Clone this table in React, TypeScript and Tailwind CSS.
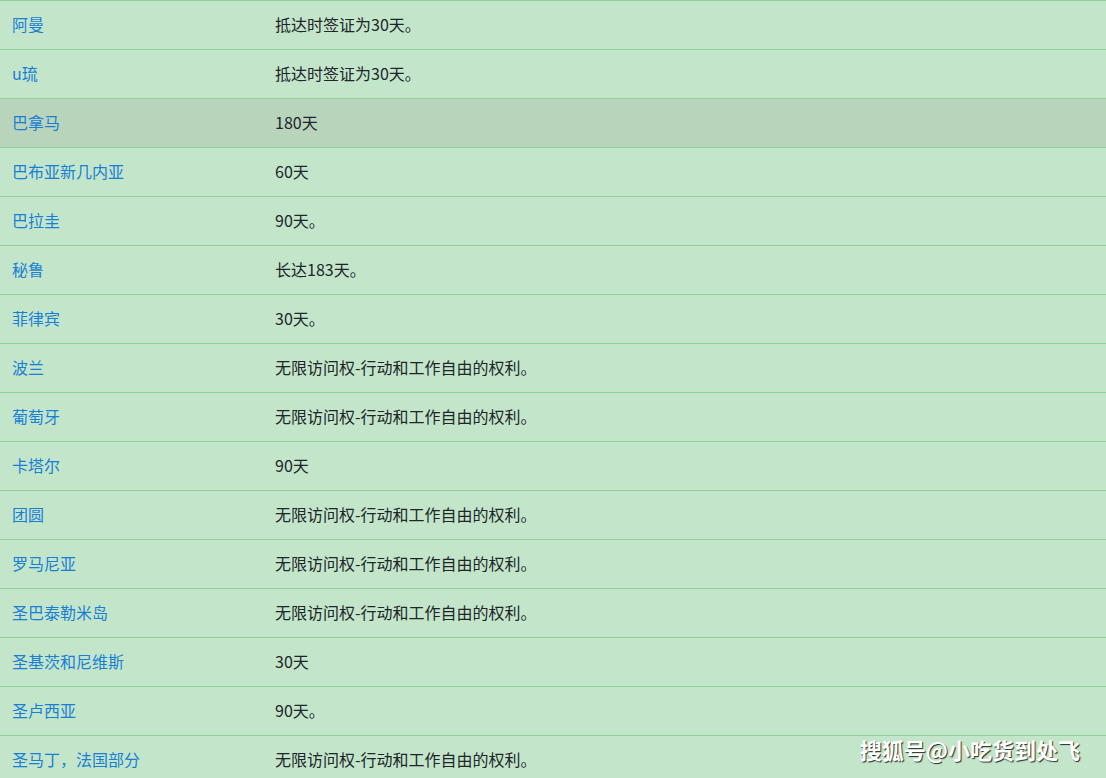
import React from "react";

const rows: [string, string][] = [
  ["阿曼", "抵达时签证为30天。"],
  ["u琉", "抵达时签证为30天。"],
  ["巴拿马", "180天"],
  ["巴布亚新几内亚", "60天"],
  ["巴拉圭", "90天。"],
  ["秘鲁", "长达183天。"],
  ["菲律宾", "30天。"],
  ["波兰", "无限访问权-行动和工作自由的权利。"],
  ["葡萄牙", "无限访问权-行动和工作自由的权利。"],
  ["卡塔尔", "90天"],
  ["团圆", "无限访问权-行动和工作自由的权利。"],
  ["罗马尼亚", "无限访问权-行动和工作自由的权利。"],
  ["圣巴泰勒米岛", "无限访问权-行动和工作自由的权利。"],
  ["圣基茨和尼维斯", "30天"],
  ["圣卢西亚", "90天。"],
  ["圣马丁，法国部分", "无限访问权-行动和工作自由的权利。"],
];

export default function App() {
  return (
    <div
      className="relative h-[778px] w-[1106px] overflow-hidden bg-[#c3e6cb] text-[16px]"
      style={{ fontFamily: '"Noto Sans CJK SC", "Noto Sans", sans-serif' }}
    >
      <table className="w-full table-fixed border-collapse">
        <tbody>
          {rows.map(([country, visa], i) => (
            <tr
              key={i}
              className={`h-[49px] border-t border-[#8fd19e] ${i === 2 ? "bg-[#b8d5bc]" : ""}`}
            >
              <td className="w-[263px] pb-[2px] pl-3 align-middle text-[#1a7fd4]">{country}</td>
              <td className="pb-[2px] pl-3 align-middle text-[#212529]">{visa}</td>
            </tr>
          ))}
        </tbody>
      </table>
      <div className="absolute right-[26px] bottom-[12px] text-[22px] font-bold text-white [text-shadow:1px_1px_1px_rgba(0,0,0,0.8)]">
        搜狐号@小吃货到处飞
      </div>
    </div>
  );
}
